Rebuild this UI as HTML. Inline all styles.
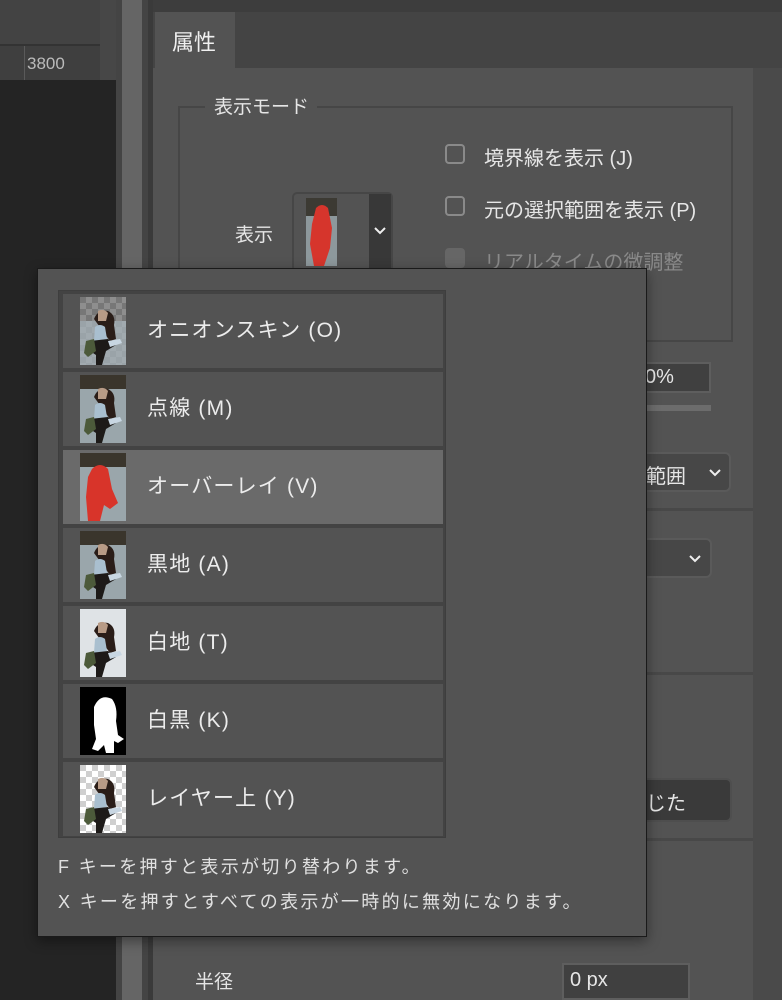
<!DOCTYPE html>
<html><head><meta charset="utf-8">
<style>
*{margin:0;padding:0;box-sizing:border-box}
body{width:782px;height:1000px;overflow:hidden;background:#535353;position:relative;font-family:"Liberation Sans","Noto Sans CJK JP",sans-serif;color:#e6e6e6}
.a{position:absolute}
.t{position:absolute;white-space:nowrap}
.chk{position:absolute;width:20px;height:20px;border:2px solid #8a8a8a;border-radius:4px}
.item{position:absolute;left:63px;width:380px;height:74px;background:#535353}
.item .th{position:absolute;left:17px;top:3px;width:46px;height:68px}
.item .lb{position:absolute;left:84px;top:0;line-height:74px;font-size:21px;letter-spacing:1.2px;color:#ececec}
</style></head><body>
<svg width="0" height="0" style="position:absolute">
<defs>
<g id="fig">
<path d="M14 22 q4-10 14-8 q8 4 6 14 l2 14 -6 2 z" fill="#2a1d18"/>
<path d="M15 30 q5-4 10 0 l2 12 -13 2 z" fill="#a9bfcf"/>
<path d="M10 44 l18-2 8 6 -10 6 -4 14 -6 0 0-10 -6-4z" fill="#1d1a18"/>
<path d="M6 44 l8 -2 2 12 -8 6 -4-4z" fill="#4c5a3a"/>
<path d="M28 44 l12 -2 2 4 -12 4z" fill="#c8d6e2"/>
<path d="M18 14 q6-3 10 2 l-2 8 -8 0z" fill="#b89b86"/>
</g>
<pattern id="chkp" width="12" height="12" patternUnits="userSpaceOnUse"><rect width="12" height="12" fill="#fff"/><rect width="6" height="6" fill="#cfcfcf"/><rect x="6" y="6" width="6" height="6" fill="#cfcfcf"/></pattern>
<pattern id="chkd" width="12" height="12" patternUnits="userSpaceOnUse"><rect width="12" height="12" fill="#8e8e8e"/><rect width="6" height="6" fill="#777"/><rect x="6" y="6" width="6" height="6" fill="#777"/></pattern>
</defs></svg>

<div class="a" style="left:0;top:0;width:100px;height:45px;background:#434343"></div>
<div class="a" style="left:0;top:45px;width:116px;height:35px;background:#3f3f3f"></div>
<div class="a" style="left:0;top:44px;width:100px;height:2px;background:#333"></div>
<div class="a" style="left:24px;top:46px;width:1px;height:34px;background:#5a5a5a"></div>
<div class="t" style="left:27px;top:54px;font-size:17px;color:#bbb">3800</div>
<div class="a" style="left:0;top:80px;width:116px;height:920px;background:#242424"></div>
<div class="a" style="left:100px;top:0;width:16px;height:80px;background:#474747"></div>
<div class="a" style="left:116px;top:0;width:6px;height:1000px;background:#444"></div>
<div class="a" style="left:122px;top:0;width:20px;height:1000px;background:#656565"></div>
<div class="a" style="left:142px;top:0;width:6px;height:1000px;background:#444"></div>
<div class="a" style="left:148px;top:0;width:5px;height:1000px;background:#3a3a3a"></div>

<div class="a" style="left:153px;top:0;width:629px;height:1000px;background:#535353"></div>
<div class="a" style="left:153px;top:0;width:629px;height:12px;background:#3d3d3d"></div>
<div class="a" style="left:153px;top:12px;width:629px;height:56px;background:#444"></div>
<div class="a" style="left:155px;top:12px;width:80px;height:58px;background:#535353"></div>
<div class="t" style="left:172px;top:25px;font-size:22px;color:#f0f0f0">属性</div>
<div class="a" style="left:753px;top:68px;width:29px;height:932px;background:#4a4a4a"></div>

<div class="a" style="left:178px;top:106px;width:555px;height:236px;border:2px solid #464646"></div>
<div class="a" style="left:205px;top:95px;width:112px;height:20px;background:#535353"></div>
<div class="t" style="left:214px;top:92px;font-size:19px;color:#e6e6e6">表示モード</div>
<div class="chk" style="left:445px;top:144px"></div>
<div class="t" style="left:484px;top:142px;font-size:20px">境界線を表示 (J)</div>
<div class="chk" style="left:445px;top:196px"></div>
<div class="t" style="left:484px;top:194px;font-size:20px">元の選択範囲を表示 (P)</div>
<div class="chk" style="left:445px;top:248px;background:#666;border-color:#666"></div>
<div class="t" style="left:484px;top:246px;font-size:20px;color:#8a8a8a">リアルタイムの微調整</div>
<div class="t" style="left:235px;top:220px;font-size:19px">表示</div>
<div class="a" style="left:292px;top:192px;width:101px;height:80px;border:2px solid #464646;border-radius:5px;background:#535353"></div>
<div class="a" style="left:369px;top:194px;width:22px;height:76px;background:#383838"></div>
<svg class="a" style="left:373px;top:226px" width="14" height="10"><path d="M2 2 L7 7 L12 2" stroke="#eee" stroke-width="2" fill="none"/></svg>
<svg class="a" style="left:306px;top:198px" width="31" height="68"><rect width="31" height="68" fill="#8d989c"/><rect width="31" height="18" fill="#3c3a33"/><path d="M10 10 q6-6 12 0 l4 20 -2 20 -6 18 -10 0 -4-22 2-20z" fill="#d6352c"/></svg>

<div class="a" style="left:640px;top:362px;width:71px;height:31px;background:#404040;border:2px solid #5e5e5e"></div>
<div class="t" style="left:645px;top:366px;font-size:20px">0%</div>
<div class="a" style="left:640px;top:405px;width:71px;height:6px;background:#6c6c6c"></div>
<div class="a" style="left:600px;top:452px;width:131px;height:40px;background:#474747;border:2px solid #5a5a5a;border-radius:6px"></div>
<div class="t" style="left:646px;top:460px;font-size:20px">範囲</div>
<svg class="a" style="left:708px;top:468px" width="14" height="10"><path d="M2 2 L7 7 L12 2" stroke="#eee" stroke-width="2" fill="none"/></svg>
<div class="a" style="left:153px;top:508px;width:600px;height:3px;background:#484848"></div>
<div class="a" style="left:600px;top:538px;width:112px;height:40px;background:#474747;border:2px solid #5a5a5a;border-radius:6px"></div>
<svg class="a" style="left:688px;top:554px" width="14" height="10"><path d="M2 2 L7 7 L12 2" stroke="#eee" stroke-width="2" fill="none"/></svg>
<div class="a" style="left:153px;top:672px;width:600px;height:3px;background:#484848"></div>
<div class="a" style="left:600px;top:778px;width:132px;height:44px;background:#3a3a3a;border:2px solid #4e4e4e;border-radius:6px"></div>
<div class="t" style="left:646px;top:787px;font-size:20px">じた</div>
<div class="a" style="left:153px;top:838px;width:600px;height:3px;background:#484848"></div>
<div class="t" style="left:195px;top:967px;font-size:19px">半径</div>
<div class="a" style="left:562px;top:963px;width:128px;height:37px;background:#404040;border:2px solid #5e5e5e"></div>
<div class="t" style="left:570px;top:969px;font-size:20px">0 px</div>

<div class="a" style="left:37px;top:268px;width:610px;height:669px;background:#535353;border:1px solid #1a1a1a;box-shadow:0 4px 12px rgba(0,0,0,.4)"></div>
<div class="a" style="left:58px;top:290px;width:388px;height:548px;background:#434343;border:1px solid #3e3e3e"></div>

<div class="item" style="top:294px">
<svg class="th" viewBox="0 0 46 68"><rect width="46" height="68" fill="url(#chkd)"/><rect y="24" width="46" height="44" fill="#a9b6bd" opacity=".7"/><use href="#fig"/></svg>
<div class="lb">オニオンスキン (O)</div></div>
<div class="item" style="top:372px">
<svg class="th" viewBox="0 0 46 68"><rect width="46" height="68" fill="#9aa6ab"/><rect width="46" height="14" fill="#3a352c"/><use href="#fig"/></svg>
<div class="lb">点線 (M)</div></div>
<div class="item" style="top:450px;background:#6a6a6a">
<svg class="th" viewBox="0 0 46 68"><rect width="46" height="68" fill="#9aa6ab"/><rect width="46" height="14" fill="#3a352c"/><path d="M12 16 q8-8 16 0 l4 20 6 14 -8 6 -6-4 -4 16 -12 0 -2-24 2-20z" fill="#d8342a"/></svg>
<div class="lb">オーバーレイ (V)</div></div>
<div class="item" style="top:528px">
<svg class="th" viewBox="0 0 46 68"><rect width="46" height="68" fill="#9aa6ab"/><rect width="46" height="14" fill="#3a352c"/><use href="#fig"/></svg>
<div class="lb">黒地 (A)</div></div>
<div class="item" style="top:606px">
<svg class="th" viewBox="0 0 46 68"><rect width="46" height="68" fill="#dfe3e6"/><use href="#fig"/></svg>
<div class="lb">白地 (T)</div></div>
<div class="item" style="top:684px">
<svg class="th" viewBox="0 0 46 68"><rect width="46" height="68" fill="#000"/><path d="M14 20 q6-14 18-8 q6 8 4 22 l2 14 6 4 -6 4 -4-2 0 12 -8 0 -2-8 -6 6 -6-2 4-10 -2-14z" fill="#fff"/></svg>
<div class="lb">白黒 (K)</div></div>
<div class="item" style="top:762px">
<svg class="th" viewBox="0 0 46 68"><rect width="46" height="68" fill="url(#chkp)"/><use href="#fig"/></svg>
<div class="lb">レイヤー上 (Y)</div></div>

<div class="t" style="left:58px;top:853px;font-size:18px;letter-spacing:2.3px;color:#e0e0e0">F キーを押すと表示が切り替わります。</div>
<div class="t" style="left:58px;top:888px;font-size:18px;letter-spacing:2.3px;color:#e0e0e0">X キーを押すとすべての表示が一時的に無効になります。</div>
</body></html>
